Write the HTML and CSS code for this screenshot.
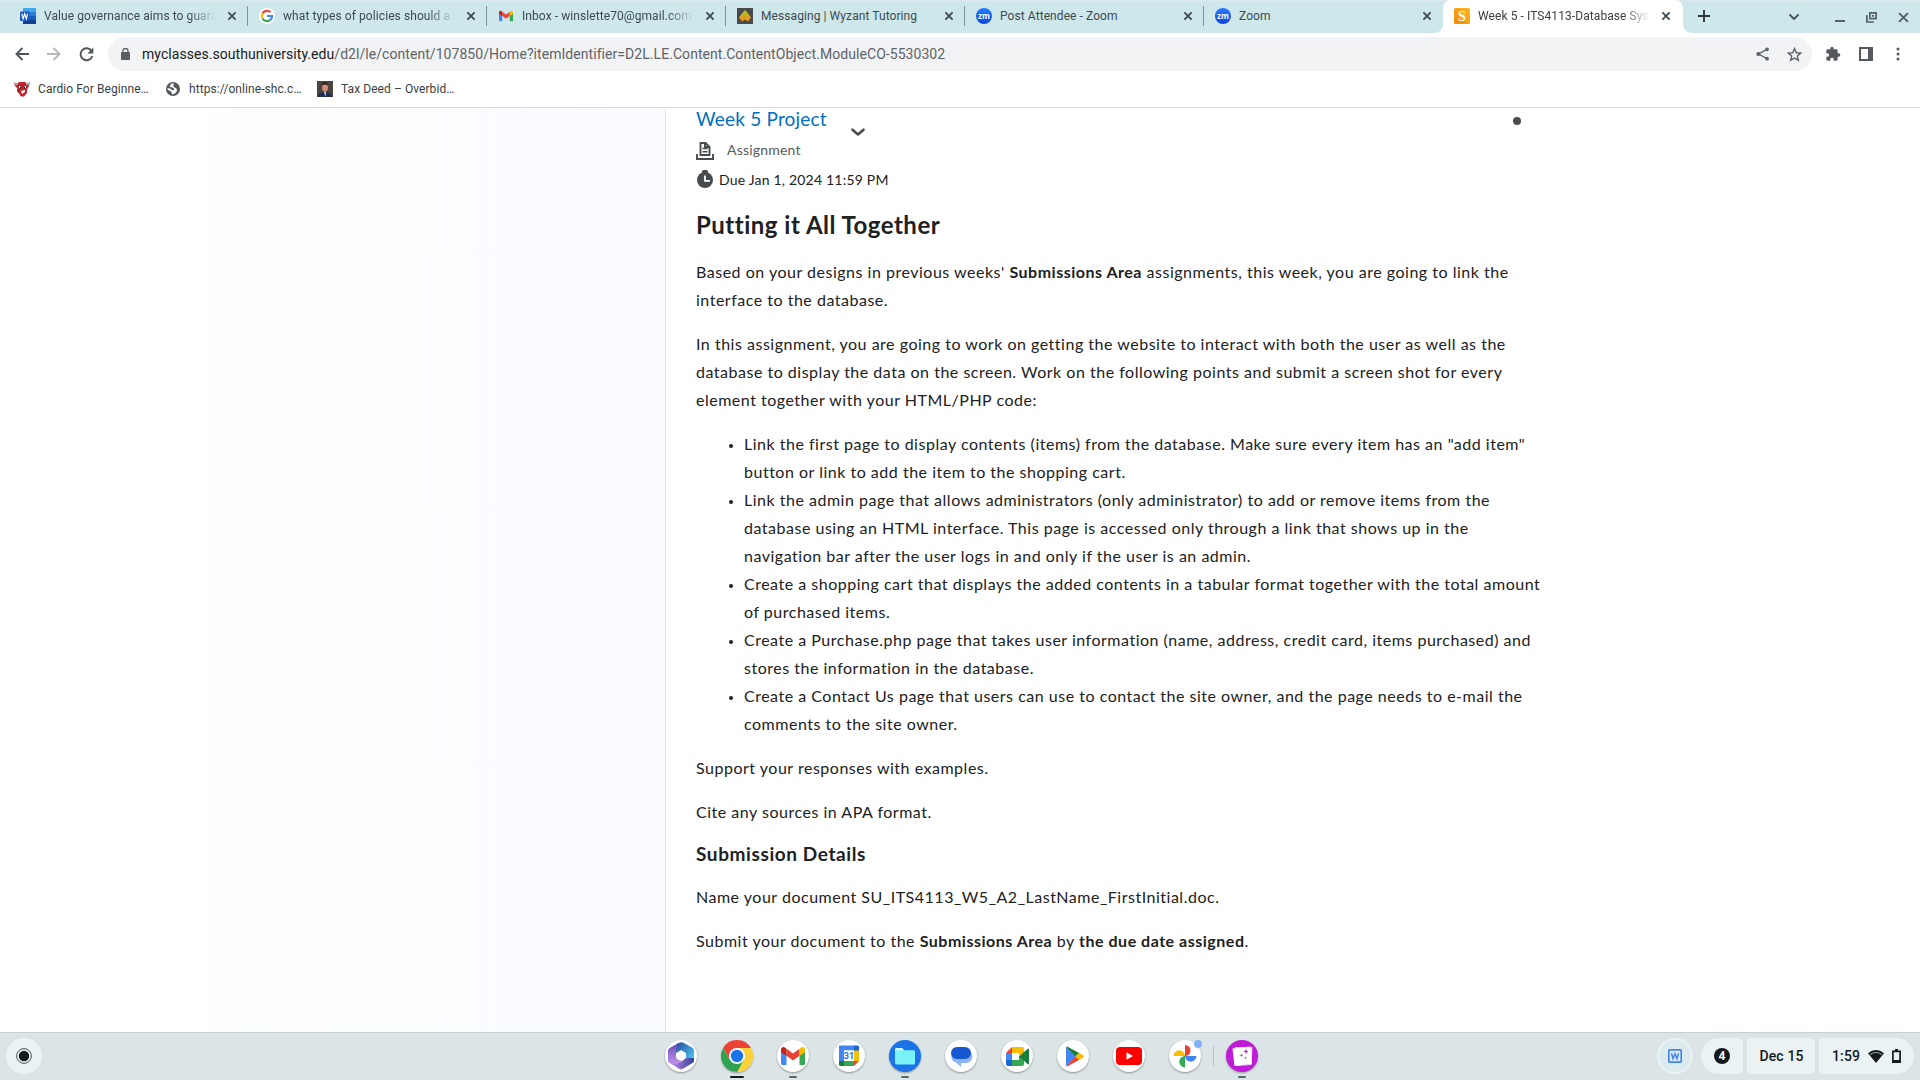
FILE: index.html
```html
<!DOCTYPE html>
<html lang="en">
<head>
<meta charset="utf-8">
<title>Week 5 - ITS4113-Database Systems</title>
<link rel="stylesheet" href="styles.css">
</head>
<body>
<svg width="0" height="0" class="defs">
  <defs>
    <linearGradient id="gz" x1="0" y1="0" x2="0" y2="1"><stop offset="0" stop-color="#2a7bff"/><stop offset="1" stop-color="#0845e0"/></linearGradient>
    <linearGradient id="gw" x1="0" y1="0" x2="0" y2="1"><stop offset="0" stop-color="#9ccc1c"/><stop offset="1" stop-color="#ff8a1c"/></linearGradient>
    <linearGradient id="gs" x1="0" y1="1" x2="1" y2="0"><stop offset="0" stop-color="#f08a00"/><stop offset="1" stop-color="#fdb827"/></linearGradient>
    <linearGradient id="m1" x1="0" y1="0" x2="0" y2="1"><stop offset="0" stop-color="#6a48b8"/><stop offset="1" stop-color="#c79af0"/></linearGradient>
    <linearGradient id="m2" x1="0" y1="0" x2="1" y2="1"><stop offset="0" stop-color="#2b4a9c"/><stop offset="1" stop-color="#4fd6fa"/></linearGradient>
    <linearGradient id="m3" x1="0" y1="0" x2="1" y2="0"><stop offset="0" stop-color="#c78bea"/><stop offset="1" stop-color="#33409c"/></linearGradient>
    <symbol id="x" viewBox="0 0 10 10"><path d="M1.400 1.400l7.200 7.200M8.600 1.400L1.400 8.600" stroke="#3c4a50" stroke-width="1.800"/></symbol>
    <symbol id="zoom" viewBox="0 0 16 16"><circle cx="8" cy="8" r="8" fill="url(#gz)"/><text x="8" y="10.600" text-anchor="middle" class="zm">zm</text></symbol>
    <symbol id="gmail" viewBox="0 0 24 18"><path d="M0 3v13.500Q0 18 1.600 18H5.500V7z" fill="#4285f4"/><path d="M24 3v13.500Q24 18 22.400 18H18.500V7z" fill="#34a853"/><path d="M5.500 1.700v7L12 13.500l6.500-4.800v-7L12 6.500z" fill="#ea4335"/><path d="M0 2.500V5l5.500 4V1.700L4 .600C2.300-.700 0 .500 0 2.500z" fill="#c5221f"/><path d="M24 2.500V5l-5.500 4V1.700L20 .600c1.700-1.300 4-.1 4 1.900z" fill="#fbbc04"/></symbol>
  </defs>
</svg>

<header class="browser">
  <div class="tabstrip">
    <div class="tab">
      <svg class="fav" viewBox="0 0 16 16"><path d="M3 0h13v4H3z" fill="#41a5ee"/><path d="M3 4h13v4H3z" fill="#2b7cd3"/><path d="M3 8h13v4H3z" fill="#185abd"/><path d="M3 12h13v4H3z" fill="#103f91"/><rect y="3.500" width="9.500" height="9.500" rx="1" fill="#185abd"/><path d="M1.800 5.600l1.300 5.200 1.600-5 1.600 5 1.300-5.200" stroke="#fff" stroke-width="1.200" fill="none"/></svg>
      <span class="title t1">Value governance aims to guarantee</span><svg class="close"><use href="#x"/></svg>
    </div>
    <div class="tab">
      <svg class="fav" viewBox="0 0 16 16"><circle cx="8" cy="8" r="8" fill="#fff"/><g fill="none" stroke-width="2.200"><path d="M11.700 4.300A5.100 5.100 0 0 0 3.500 5.600" stroke="#ea4335"/><path d="M3.500 5.600a5.100 5.100 0 0 0 0 4.800" stroke="#fbbc05"/><path d="M3.500 10.400a5.100 5.100 0 0 0 7.800 1.500" stroke="#34a853"/><path d="M11.300 11.900A5 5 0 0 0 13.100 8H8" stroke="#4285f4"/></g></svg>
      <span class="title t2">what types of policies should a company</span><svg class="close"><use href="#x"/></svg>
    </div>
    <div class="tab">
      <svg class="fav"><use href="#gmail" x="1" y="2.500" width="14" height="11"/></svg>
      <span class="title t3">Inbox - winslette70@gmail.com - Gmail</span><svg class="close"><use href="#x"/></svg>
    </div>
    <div class="tab">
      <svg class="fav" viewBox="0 0 16 16"><path d="M0 0h16v16H0z" fill="#484b4e"/><path d="M8 2l3.200 3.600 2.800 4-3 4-3-2-3 2-3-4 2.800-4z" fill="url(#gw)"/></svg>
      <span class="title">Messaging | Wyzant Tutoring</span><svg class="close"><use href="#x"/></svg>
    </div>
    <div class="tab">
      <svg class="fav"><use href="#zoom"/></svg>
      <span class="title">Post Attendee - Zoom</span><svg class="close"><use href="#x"/></svg>
    </div>
    <div class="tab last">
      <svg class="fav"><use href="#zoom"/></svg>
      <span class="title">Zoom</span><svg class="close"><use href="#x"/></svg>
    </div>
    <div class="tab active">
      <svg class="fav" viewBox="0 0 16 16"><rect width="16" height="16" rx="1.500" fill="url(#gs)"/><text x="8" y="13" text-anchor="middle" class="slet">S</text></svg>
      <span class="title t7">Week 5 - ITS4113-Database Systems</span><svg class="close"><use href="#x"/></svg>
    </div>
    <svg class="plus" viewBox="0 0 12 12"><path d="M6 0v12M0 6h12" stroke="#30363a" stroke-width="1.900"/></svg>
    <div class="wincontrols">
      <svg width="12" height="8" viewBox="0 0 12 8"><path d="M1.500 1.500L6 6l4.500-4.500" fill="none" stroke="#45525a" stroke-width="1.800"/></svg>
      <svg width="10" height="12" viewBox="0 0 10 12"><path d="M0 10h10" stroke="#54626a" stroke-width="2"/></svg>
      <svg width="11" height="11" viewBox="0 0 11 11"><g fill="none" stroke="#54626a" stroke-width="1.700"><path d="M3.900.9h6.200v5.800H3.900z"/><path d="M.9 3v7h7M6 3.800h2"/></g></svg>
      <svg width="11" height="11" viewBox="0 0 10 10"><path d="M1 1l8 8M9 1L1 9" stroke="#54626a" stroke-width="1.800"/></svg>
    </div>
  </div>
  <div class="toolbar">
    <svg width="14" height="14" viewBox="0 0 14 14"><path d="M14 7H1.500M7.500 1l-6 6 6 6" fill="none" stroke="#50555a" stroke-width="1.900"/></svg>
    <svg width="14" height="14" viewBox="0 0 14 14"><path d="M0 7h12.500M6.500 1l6 6-6 6" fill="none" stroke="#b4b7ba" stroke-width="1.900"/></svg>
    <svg class="reload" width="15" height="15" viewBox="0 0 15 15"><path d="M12.600 4A6 6 0 1 0 13.300 9" fill="none" stroke="#50555a" stroke-width="1.900"/><path d="M14.300.600v6H8.300z" fill="#50555a"/></svg>
    <div class="omnibox">
      <svg width="9" height="12" viewBox="0 0 9 12"><rect y="4" width="9" height="8" rx="1" fill="#5a5e63"/><path d="M2 5V3a2.500 2.500 0 0 1 5 0v2" fill="none" stroke="#5a5e63" stroke-width="1.300"/></svg>
      <span class="url"><b>myclasses.southuniversity.edu</b>/d2l/le/content/107850/Home?itemIdentifier=D2L.LE.Content.ContentObject.ModuleCO-5530302</span>
      <svg width="13" height="14" viewBox="0 0 13 14"><path d="M11 2.300L2.500 7 11 11.700" fill="none" stroke="#5f6368" stroke-width="1.400"/><g fill="#5f6368"><circle cx="11" cy="2.300" r="1.900"/><circle cx="2.300" cy="7" r="2"/><circle cx="11" cy="11.700" r="1.900"/></g></svg>
      <svg class="star" width="15" height="15" viewBox="0 0 24 24"><path d="M12 2.500l2.800 6.700 7.200.6-5.500 4.700 1.700 7L12 17.800l-6.200 3.700 1.700-7L2 9.800l7.200-.6z" fill="none" stroke="#5f6368" stroke-width="2.200"/></svg>
    </div>
    <svg width="16" height="16" viewBox="0 0 24 24"><path fill="#55595e" d="M20.500 11H19V7c0-1.100-.9-2-2-2h-4V3.500a2.500 2.500 0 0 0-5 0V5H4c-1.100 0-2 .9-2 2v3.800h1.500a2.700 2.700 0 0 1 0 5.400H2V20c0 1.100.9 2 2 2h3.800v-1.500a2.700 2.700 0 0 1 5.400 0V22H17c1.100 0 2-.9 2-2v-4h1.500a2.500 2.500 0 0 0 0-5z"/></svg>
    <svg width="14" height="14" viewBox="0 0 14 14"><path d="M1 1h12v12H1z" fill="none" stroke="#55595e" stroke-width="2"/><path d="M9 1h4v12H9z" fill="#55595e"/></svg>
    <svg class="more" width="4" height="14" viewBox="0 0 4 14" fill="#55595e"><circle cx="2" cy="2" r="1.500"/><circle cx="2" cy="7" r="1.500"/><circle cx="2" cy="12" r="1.500"/></svg>
  </div>
  <div class="bookmarks">
    <a><svg viewBox="0 0 16 16"><path d="M0 2l3 1 2-2 6 0 2 2 3-1-2 5-1 1v4l-3 3.500H7L4 11 3 7 1 5z" fill="#c9202b"/><path d="M0 1l3 1 1 2-3 0zM16 1l-3 1-1 2 3 0z" fill="#a9b0b4"/><path d="M5 5h2v2H5zM10 5h2v2h-2zM7 10l4-1v2l-3 2z" fill="#fff"/><path d="M6 5.500h1v2H6zM10 5.500h1v2h-1zM3 8l2 2-1 2z" fill="#222"/></svg><span>Cardio For Beginne…</span></a>
    <a><svg viewBox="0 0 16 16"><circle cx="8" cy="8" r="7" fill="#55595e"/><path d="M8.500 2.300c-3 0-3 2-4 3.200C6 6.500 9.500 6.500 9 8.500c-.5 1.500-3 0-4-1L2.500 7c-.2 1 .5 2 1.500 2.500l2.500 1.300.5 2.500c2.500 0 5-2.300 5-4.300 0-2.500-3.300-2-3.500-3.700z" fill="#fff"/></svg><span>https://online-shc.c…</span></a>
    <a><svg viewBox="0 0 16 16"><path d="M0 0h16v16H0z" fill="#4b4340"/><path d="M1 16l1-3 4-2h4l4 2 1 3z" fill="#1e2d4c"/><ellipse cx="8" cy="6.500" rx="3" ry="4.200" fill="#cf8f75"/><path d="M5 5c0-5 6-5 6 0-1-2-5-2-6 0z" fill="#2b1d17"/><path d="M7 11h2l-.5 5z" fill="#e4e4ee"/></svg><span>Tax Deed – Overbid…</span></a>
  </div>
</header>

<div class="page">
  <aside class="side"></aside>
  <main class="content">
    <div class="topic">
      <a class="topic-link">Week 5 Project</a>
      <svg class="chev" width="14" height="9" viewBox="0 0 14 9"><path d="M1.500 1.700L7 6.500l5.500-4.800" fill="none" stroke="#494c4e" stroke-width="2.600" stroke-linecap="round" stroke-linejoin="round"/></svg>
      <i class="dot"></i>
    </div>
    <div class="kind">
      <svg width="18" height="18" viewBox="0 0 18 18" fill="none" stroke="#494c4e" stroke-width="1.900"><path d="M1 12v5h16v-5"/><path d="M4.500 13V1h5L13.500 5v8z"/><path d="M6.500 6.500h5M6.500 9.800h5" stroke-width="1.600"/><path d="M9 1v4h4"/></svg>
      <span>Assignment</span>
    </div>
    <div class="due">
      <svg width="16" height="18" viewBox="0 0 16 18"><circle cx="8" cy="10" r="8" fill="#494c4e"/><path d="M5 3V1.500Q5 0 6.500 0h3Q11 0 11 1.500V3z" fill="#494c4e"/><path d="M8 5.500v5.300h5" fill="none" stroke="#fff" stroke-width="1.800"/></svg>
      <span>Due Jan 1, 2024 11:59 PM</span>
    </div>
    <h2>Putting it All Together</h2>
    <p>Based on your designs in previous weeks' <strong>Submissions Area</strong> assignments, this week, you are going to link the interface to the database.</p>
    <p>In this assignment, you are going to work on getting the website to interact with both the user as well as the database to display the data on the screen. Work on the following points and submit a screen shot for every element together with your HTML/PHP code:</p>
    <ul>
      <li>Link the first page to display contents (items) from the database. Make sure every item has an "add item" button or link to add the item to the shopping cart.</li>
      <li>Link the admin page that allows administrators (only administrator) to add or remove items from the database using an HTML interface. This page is accessed only through a link that shows up in the navigation bar after the user logs in and only if the user is an admin.</li>
      <li>Create a shopping cart that displays the added contents in a tabular format together with the total amount of purchased items.</li>
      <li>Create a Purchase.php page that takes user information (name, address, credit card, items purchased) and stores the information in the database.</li>
      <li>Create a Contact Us page that users can use to contact the site owner, and the page needs to e-mail the comments to the site owner.</li>
    </ul>
    <p>Support your responses with examples.</p>
    <p>Cite any sources in APA format.</p>
    <h3>Submission Details</h3>
    <p>Name your document SU_ITS4113_W5_A2_LastName_FirstInitial.doc.</p>
    <p>Submit your document to the <strong>Submissions Area</strong> by <strong>the due date assigned</strong>.</p>
  </main>
</div>

<footer class="shelf">
  <div class="launcher"><svg width="16" height="16" viewBox="0 0 16 16"><circle cx="8" cy="8" r="7.400" fill="none" stroke="#4a5256" stroke-width="1"/><circle cx="8" cy="8" r="5.200" fill="#14191c"/></svg></div>
  <div class="apps">
    <div class="app"><svg viewBox="0 0 32 32"><path d="M14 2.800L4.500 8Q3 9 3 10.500v10Q3 22 4.500 23L11 26l6-5-6-3v-5l8-5z" fill="url(#m1)"/><path d="M12 4l3-1.500q1.500-.7 3 0l9.500 5.300Q29 8.800 29 10.500v11.500l-8-4.500V13l-5-3-5 3z" fill="url(#m2)"/><path d="M5 23l9.500 6q1.500.7 3 0l10-6q1.500-1 1.500-2.500V18l-8 0-6 4.500-5 1.500z" fill="url(#m3)"/><circle cx="16" cy="16" r="4.600" fill="#fff"/></svg></div>
    <div class="app run cur"><svg viewBox="0 0 32 32"><path d="M16 16L2.140 8A16 16 0 0 1 29.860 8z" fill="#ea4335"/><path d="M16 16V8h13.860A16 16 0 0 1 16 32z" fill="#fdd23b"/><path d="M2.140 8H16v8l-7 4z" fill="#ea4335"/><path d="M2.140 8A16 16 0 0 0 16 32l7-12H9z" fill="#2fa350"/><circle cx="16" cy="16" r="8" fill="#fff"/><circle cx="16" cy="16" r="6.200" fill="#1a73e8"/></svg></div>
    <div class="app run"><svg viewBox="0 0 32 32"><use href="#gmail" x="4" y="7" width="24" height="18"/></svg></div>
    <div class="app"><svg viewBox="0 0 32 32"><path d="M6 5.500h16v5H11v11H6z" fill="#4285f4"/><path d="M21 5.500h3.500Q26 5.500 26 7v4h-5z" fill="#1967d2"/><path d="M21 10.500h5v11h-5z" fill="#fbbc04"/><path d="M6 21h5v5H7.500Q6 26 6 24.500z" fill="#188038"/><path d="M11 21h10v5H11z" fill="#34a853"/><path d="M21 21h5l-5 5z" fill="#ea4335"/><path d="M11 10.500h10V21H11z" fill="#fff"/><text x="16" y="19.200" text-anchor="middle" class="cal">31</text></svg></div>
    <div class="app blue run"><svg viewBox="0 0 32 32"><path d="M6 9.500Q6 8 7.500 8H13l2 2.200h9.500Q26 10.200 26 11.700V23q0 1.500-1.500 1.500h-17Q6 24.500 6 23z" fill="#7bf3f5"/><path d="M6 9.500Q6 8 7.500 8H13l2 2.200h-9z" fill="#d7fdfd"/></svg></div>
    <div class="app"><svg viewBox="0 0 32 32"><path d="M11 10h10a6.500 6.500 0 0 1 0 13l-5 0v4l-5-4.500a6.500 6.500 0 0 1 0-12.500z" fill="#8ab4f8"/><rect x="6" y="7" width="20" height="12" rx="6" fill="#1558d0"/></svg></div>
    <div class="app"><svg viewBox="0 0 32 32"><path d="M11 7v6H5z" fill="#ea4335"/><path d="M11 7h10q2 0 2 2v4l-5 3v-3h-7z" fill="#fbbc04"/><path d="M5 13h6v7H5z" fill="#4285f4"/><path d="M5 20h6v6H7q-2 0-2-2z" fill="#1967d2"/><path d="M11 20h7v-4l5 3.500V24q0 2-2 2H11z" fill="#34a853"/><path d="M18 16.500L26.500 9q1.500-1 1.500.5v14q0 1.500-1.500.5z" fill="#188038"/></svg></div>
    <div class="app"><svg viewBox="0 0 32 32"><path d="M9 7l10 9.500L9 26z" fill="#4285f4"/><path d="M9 7q.8-.8 2 0l12 6.500-4.500 3z" fill="#188038"/><path d="M9 26q.8.8 2 0l12-6.500-4.500-3z" fill="#ea4335"/><path d="M22 12.800l4.500 2.700q1 1 0 1.800L22 20l-4-3.500z" fill="#fbbc04"/></svg></div>
    <div class="app"><svg viewBox="0 0 32 32"><rect x="3" y="7" width="26" height="18" rx="4" fill="#f00"/><path d="M13.500 12.200v7.600l6.500-3.800z" fill="#fff"/></svg></div>
    <div class="app badge"><svg viewBox="0 0 32 32"><path d="M16 16V5a5.500 5.500 0 0 1 0 11z" fill="#ea4335"/><path d="M16 16h11.500a5.500 5.500 0 0 1-11.500 0z" fill="#4285f4"/><path d="M16 16v11.500a5.500 5.500 0 0 1 0-11.500z" fill="#34a853"/><path d="M16 16H4.500a5.700 5.700 0 0 1 11.500 0z" fill="#fbbc04"/></svg></div>
    <i class="divider"></i>
    <div class="app purple run"><svg viewBox="0 0 32 32"><path d="M9 7l17.500 0-1 18-15 1z" fill="#f3c7f7"/><path d="M6.500 8.500L24.500 6.500l1.500 17L8.500 26z" fill="#fff"/><path d="M20 8.800l.7 2 2 .7-2 .7-.7 2-.7-2-2-.7 2-.7zM15.500 13.500l.5 1.300 1.300.5-1.300.5-.5 1.300-.5-1.300-1.300-.5 1.300-.5zM19.500 16.500l.4 1 1 .4-1 .4-.4 1-.4-1-1-.4 1-.4z" fill="#c01bd6"/></svg></div>
  </div>
  <div class="tray">
    <div class="holding"><svg width="14" height="14" viewBox="0 0 14 14"><rect x=".8" y=".8" width="12.400" height="12.400" rx="1" fill="#dcebf6" stroke="#4484ec" stroke-width="1.700"/><path d="M3.500 4.300L5 9.700l2-5 2 5 1.500-5.400" fill="none" stroke="#4484ec" stroke-width="1.500"/></svg></div>
    <div class="pill notif"><b>4</b></div>
    <div class="pill date">Dec 15</div>
    <div class="pill status"><span>1:59</span>
      <svg width="16" height="13" viewBox="0 0 16 13"><path d="M0 3.200Q8-3 16 3.200L8 13z" fill="#14191c"/><path d="M2 4.500Q8 .500 14 4.500" fill="none" stroke="#9aa3a6" stroke-width="1"/></svg>
      <svg width="9" height="14" viewBox="0 0 9 14"><path d="M3 0h3v2H3z" fill="#14191c"/><path d="M.9 2.400h7.200v10.700H.9z" fill="none" stroke="#14191c" stroke-width="1.700"/><path d="M1 11h7v2H1z" fill="#14191c"/></svg>
    </div>
  </div>
</footer>
</body>
</html>
```
FILE: styles.css
```css
* { box-sizing: border-box; }
body { margin: 0; width: 1920px; height: 1080px; overflow: hidden; background: #fff; font-family: "Roboto", sans-serif; display: flex; flex-direction: column; }
svg { display: block; flex: none; }
.defs { position: absolute; }
.browser { height: 108px; flex: none; border-bottom: 1px solid #dadce0; }

.tabstrip { height: 33px; background: #cee7eb; display: flex; padding-left: 9px; border-top: 1px solid #dbeaee; }
.tab { width: 239px; height: 32px; display: flex; align-items: center; padding: 0 11px 2px 11px; position: relative; font-size: 12px; color: #3c4a50; background: linear-gradient(#7f9499, #7f9499) no-repeat right 5px / 1px 20px; }
.tab.last { background: none; }
.tab.active { background: #fff; border-radius: 8px 8px 0 0; width: 240px; color: #3c4043; margin-top: -1px; height: 33px; padding-bottom: 1px; }
.tab.active::before, .tab.active::after { content: ""; position: absolute; bottom: 0; width: 8px; height: 8px; }
.tab.active::before { left: -8px; background: radial-gradient(circle at 0 0, transparent 7.5px, #fff 8px); }
.tab.active::after { right: -8px; background: radial-gradient(circle at 100% 0, transparent 7.5px, #fff 8px); }
.fav { width: 16px; height: 16px; }
.title { width: 172px; margin-left: 8px; white-space: nowrap; overflow: hidden; letter-spacing: 0.08px; line-height: 18px; }
.t1, .t2, .t3, .t7 { -webkit-mask-image: linear-gradient(90deg, #000 145px, transparent 172px); mask-image: linear-gradient(90deg, #000 145px, transparent 172px); }
.close { width: 10px; height: 10px; margin-left: 11px; }
.zm { font: bold 8px "Open Sans", sans-serif; fill: #fff; }
.slet { font: bold 14px "Liberation Serif", serif; fill: #fff; }
.cal { font: bold 9px "Roboto", sans-serif; fill: #1a73e8; }
.plus { width: 12px; height: 12px; margin: 9px 0 0 15px; }
.wincontrols { display: flex; align-items: center; margin-left: 78px; height: 32px; gap: 21px; }
.wincontrols svg:first-child { margin-right: 14px; }

.toolbar { height: 42px; display: flex; align-items: center; padding: 0 20px 0 15px; gap: 18px; }
.reload { margin-right: -1px; }
.more { margin-left: 5px; }
.omnibox { flex: 1; height: 34px; border-radius: 17px; background: #f1f3f4; display: flex; align-items: center; padding: 0 10px 0 13px; margin-right: -5px; margin-left: -3px; }
.url { margin-left: 12px; flex: 1; font-size: 14px; letter-spacing: 0.055px; color: #5f6368; white-space: nowrap; }
.url b { font-weight: 400; color: #202124; }
.star { margin-left: 18px; }

.bookmarks { height: 28px; padding-left: 14px; display: flex; align-items: center; }
.bookmarks a { display: flex; align-items: center; width: 152px; font-size: 12px; color: #3c4043; letter-spacing: 0.07px; white-space: nowrap; }
.bookmarks svg { width: 16px; height: 16px; margin-right: 8px; }
.bookmarks a:first-child { width: 151px; }

.page { flex: 1; display: flex; min-height: 0; font-family: "Lato", sans-serif; }
.side { width: 666px; flex: none; background: linear-gradient(90deg, #fff 0, #fff 20%, #f9fbff 100%); border-right: 1px solid #e3e9f1; }
.content { width: 880px; padding-left: 30px; overflow: hidden; font-size: 16px; line-height: 28px; letter-spacing: 0.51px; color: #202122; }
.topic { display: flex; height: 26px; align-items: flex-start; }
.topic-link { color: #006fbf; font-size: 19px; line-height: 22px; letter-spacing: 0.2px; width: 131px; white-space: nowrap; }
.chev { margin: 20px 0 0 24px; }
.dot { width: 8px; height: 8px; border-radius: 50%; background: #494c4e; margin: 9px 0 0 648px; flex: none; }
.kind { display: flex; height: 32px; align-items: center; gap: 13px; font-size: 14px; color: #565a5c; letter-spacing: 0.2px; }
.kind svg { margin-top: 2px; }
.due { display: flex; height: 28px; align-items: center; gap: 6px; padding-left: 1px; font-size: 14px; letter-spacing: 0.2px; }
.due svg { margin-bottom: 3px; }
h2 { font-size: 24px; line-height: 36px; margin: 13px 0 15px; letter-spacing: 0.5px; }
h3 { font-size: 19px; line-height: 28px; margin: -2px 0 15px; letter-spacing: 0.6px; }
p { margin: 0 0 16px; }
h3 + p { margin-top: 0; }
ul { margin: 0 0 16px; padding-left: 48px; }
li::marker { font-size: 13px; }

.shelf { height: 48px; flex: none; background: #dbe4e6; border-top: 1px solid #c6cfd2; display: flex; align-items: center; padding: 0 6px 1px; }
.launcher { width: 36px; height: 36px; border-radius: 50%; background: #ebf2f4; display: grid; place-items: center; }
.apps { display: flex; align-items: center; gap: 24px; margin-left: 623px; }
.app { width: 32px; height: 32px; border-radius: 50%; background: #fff; box-shadow: 0 1px 2px rgba(0,0,0,.35); position: relative; }
.app svg { width: 32px; height: 32px; }
.app.blue { background: #1a73e8; }
.app.purple { background: #c01bd6; }
.run::after { content: ""; position: absolute; left: 12px; top: 36px; width: 8px; height: 2px; border-radius: 1px; background: #56696f; }
.cur::after { left: 9px; width: 14px; background: #14191c; }
.badge::after { content: ""; position: absolute; right: -1px; top: 0; width: 8px; height: 8px; border-radius: 50%; background: #83aef8; }
.divider { width: 1px; height: 20px; background: #bac4c8; margin: 0 -12px; }
.tray { display: flex; align-items: center; gap: 4px; color: #14191c; font-size: 14px; font-weight: 500; margin-left: auto; letter-spacing: 0.15px; }
.holding { width: 36px; height: 36px; border-radius: 50%; background: #dcebee; border: 2px solid #ebf2f4; display: grid; place-items: center; margin-right: 4px; }
.pill { height: 36px; border-radius: 4px; background: #ebf2f4; display: flex; align-items: center; justify-content: center; }
.notif { width: 42px; border-radius: 18px 4px 4px 18px; }
.notif b { width: 16px; height: 16px; border-radius: 50%; background: #14191c; color: #fff; font-size: 12px; line-height: 16px; text-align: center; }
.date { width: 68px; padding-left: 1px; }
.status { width: 95px; border-radius: 4px 18px 18px 4px; gap: 8px; justify-content: flex-start; padding-left: 13px; }
```
